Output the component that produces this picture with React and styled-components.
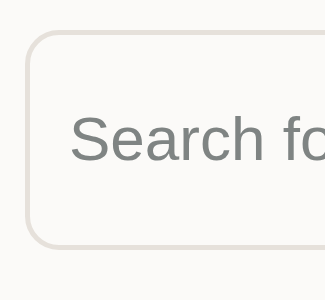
import React from "react";
import styled, { createGlobalStyle } from "styled-components";

const Global = createGlobalStyle`
  html, body {
    margin: 0;
    padding: 0;
    background: #fbfaf8;
    overflow: hidden;
  }
`;

const Page = styled.div`
  width: 325px;
  height: 300px;
  padding: 30px 0 0 25px;
  box-sizing: border-box;
  overflow: hidden;
  background: #fbfaf8;
`;

const SearchInput = styled.input`
  display: block;
  width: 460px;
  height: 220px;
  box-sizing: border-box;
  border: 5px solid #e6e1db;
  border-radius: 34px;
  padding: 0 0 4px 39px;
  background: #fbfaf8;
  font-family: "Liberation Sans", Arial, sans-serif;
  font-size: 62px;
  color: #6f7775;
  outline: none;

  &::placeholder {
    color: #7f8483;
    opacity: 1;
  }
`;

export default function App() {
  return (
    <>
      <Global />
      <Page>
        <SearchInput type="text" placeholder="Search for anything" />
      </Page>
    </>
  );
}
